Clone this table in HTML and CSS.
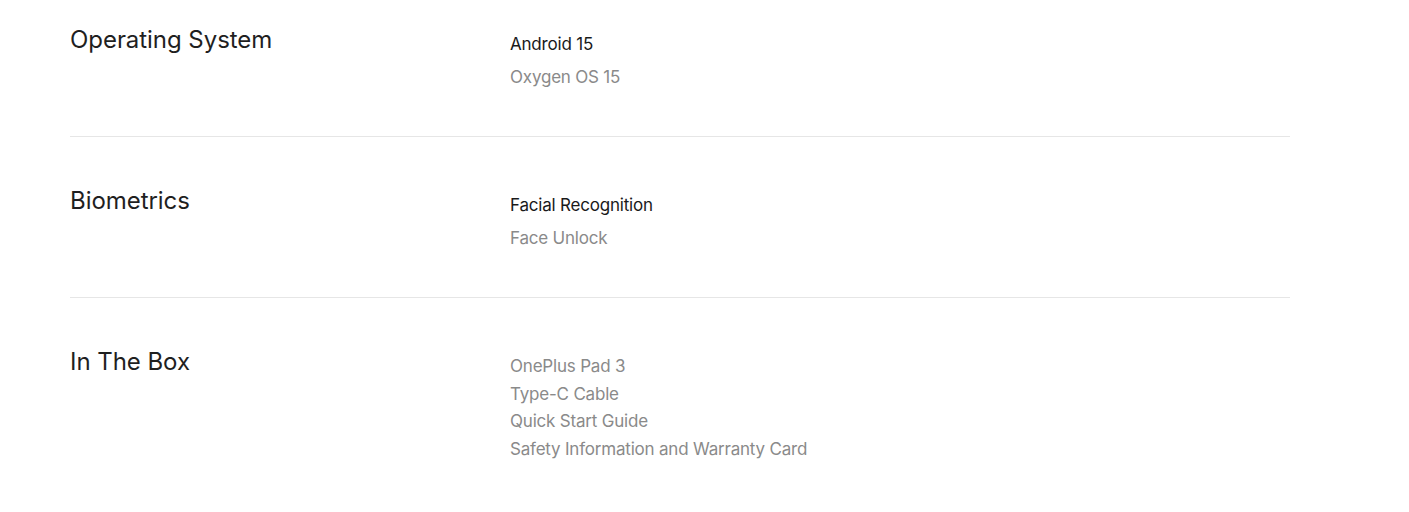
FILE: index.html
```html
<!DOCTYPE html>
<html lang="en">
<head>
<meta charset="utf-8">
<title>Specs</title>
<link rel="stylesheet" href="styles.css">
</head>
<body>
<main class="specs">
  <section class="spec">
    <h2 class="spec-title">Operating System</h2>
    <div class="spec-values">
      <p class="primary">Android 15</p>
      <p class="secondary">Oxygen OS 15</p>
    </div>
  </section>
  <section class="spec">
    <h2 class="spec-title">Biometrics</h2>
    <div class="spec-values">
      <p class="primary">Facial Recognition</p>
      <p class="secondary">Face Unlock</p>
    </div>
  </section>
  <section class="spec">
    <h2 class="spec-title">In The Box</h2>
    <ul class="spec-list">
      <li>OnePlus Pad 3</li>
      <li>Type-C Cable</li>
      <li>Quick Start Guide</li>
      <li>Safety Information and Warranty Card</li>
    </ul>
  </section>
</main>
</body>
</html>
```
FILE: styles.css
```css
* { box-sizing: border-box; }
html, body { margin: 0; padding: 0; background: #fff; }
body {
  font-family: Inter, "Noto Sans", sans-serif;
  color: #1f1f1f;
  -webkit-font-smoothing: antialiased;
}
.specs {
  width: 1220px;
  margin-left: 70px;
}
.spec {
  display: grid;
  grid-template-columns: 440px 1fr;
  padding: 49px 0 45px;
  border-bottom: 1px solid #e6e6e6;
}
.spec:first-child { padding-top: 25px; }
.spec:last-child { border-bottom: none; }
.spec-title {
  margin: 0;
  font-size: 24px;
  line-height: 30px;
  font-weight: 400;
  letter-spacing: -0.05px;
  color: #1f1f1f;
}
.spec-values p {
  margin: 5px 0 0;
  font-size: 17px;
  line-height: 28px;
  letter-spacing: -0.2px;
}
.primary { color: #1a1a1a; }
.secondary { color: #8a8a8a; }
.spec-list {
  list-style: none;
  margin: 6px 0 0;
  padding: 0;
}
.spec-list li {
  font-size: 17px;
  line-height: 27.7px;
  letter-spacing: -0.2px;
  color: #8a8a8a;
}
```
